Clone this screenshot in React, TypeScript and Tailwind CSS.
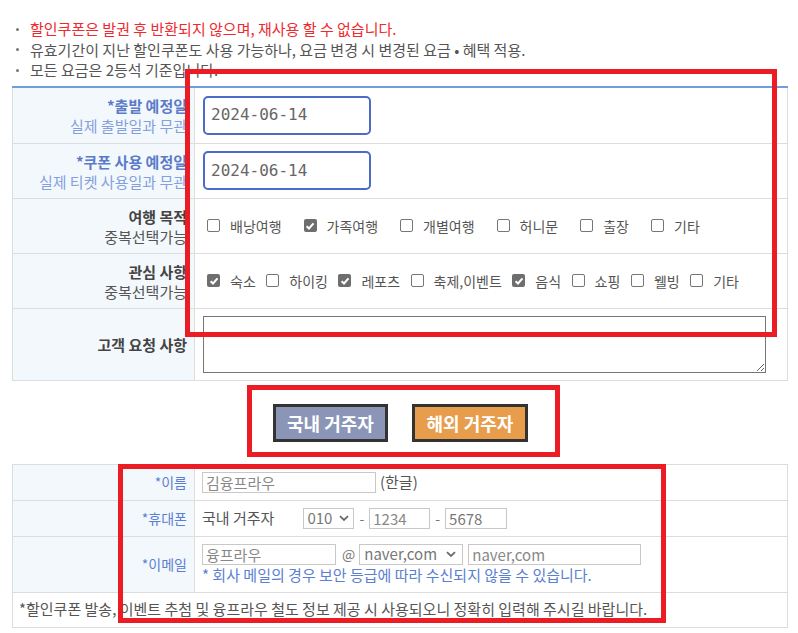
import React from "react";

function Check({ checked }: { checked?: boolean }) {
  return checked ? (
    <span className="w-[13px] h-[13px] rounded-[2px] bg-[#6e6e6e] flex items-center justify-center shrink-0">
      <svg width="10" height="10" viewBox="0 0 10 10">
        <path d="M1.6 5.2 L4 7.5 L8.5 2.3" stroke="white" strokeWidth="2" fill="none" />
      </svg>
    </span>
  ) : (
    <span className="w-[13px] h-[13px] rounded-[2px] border border-[#767676] bg-white shrink-0" />
  );
}

function Item({ label, checked }: { label: string; checked?: boolean }) {
  return (
    <span className="flex items-center gap-[10px]">
      <Check checked={checked} />
      <span className="text-[14px] leading-[18px] text-[#555]">{label}</span>
    </span>
  );
}

function Chevron() {
  return (
    <svg width="10" height="7" viewBox="0 0 10 7">
      <path d="M1 1.2 L5 5 L9 1.2" stroke="#6a6a6a" strokeWidth="1.8" fill="none" />
    </svg>
  );
}

function TopRow({
  h,
  label,
  children,
}: {
  h: string;
  label: React.ReactNode;
  children: React.ReactNode;
}) {
  return (
    <div className={`flex border-b border-[#dddddd] ${h}`}>
      <div className="w-[183px] shrink-0 bg-[#f3f8fc] border-l border-r border-[#dddddd] flex flex-col justify-center items-end pr-[7px] pt-[2px] text-right text-[15px] leading-[20px] whitespace-nowrap">
        {label}
      </div>
      <div className="flex-1 border-r border-[#dddddd] flex items-center pl-[8px]">{children}</div>
    </div>
  );
}

function BottomRow({
  h,
  label,
  children,
  top,
}: {
  h: string;
  label: string;
  children: React.ReactNode;
  top?: boolean;
}) {
  return (
    <div className={`flex border-b border-[#dddddd] ${h}`}>
      <div className="w-[183px] shrink-0 bg-[#f3f8fc] border-l border-r border-[#dddddd] flex items-center justify-end pr-[7px] text-[14px] text-[#5b7fd1]">
        {label}
      </div>
      <div
        className={`flex-1 border-r border-[#dddddd] flex pl-[7px] ${
          top ? "flex-col pt-[7px]" : "items-center"
        }`}
      >
        {children}
      </div>
    </div>
  );
}

function DateBox() {
  return (
    <div className="w-[168px] h-[39px] border-2 border-[#4a6cc6] rounded-[5px] pl-[6px] flex items-center font-['DejaVu_Sans_Mono',monospace] text-[16px] text-[#666]">
      2024-06-14
    </div>
  );
}

function Box({ w, text, color = "#888" }: { w: string; text?: string; color?: string }) {
  return (
    <div
      className={`${w} h-[21px] border border-[#c8c8c8] bg-white pl-[3px] flex items-center text-[15px] leading-[19px] whitespace-nowrap`}
      style={{ color }}
    >
      {text}
    </div>
  );
}

export default function App() {
  return (
    <div className="relative w-[798px] h-[633px] overflow-hidden bg-white font-['Noto_Sans_CJK_KR',sans-serif] text-[#555]">
      <ul className="pt-[19px] pl-[12px] text-[15px] leading-[20.5px]">
        <li className="flex items-center">
          <span className="ml-[4px] mr-[11px] w-[3px] h-[3px] rounded-full bg-[#777]" />
          <span className="text-[#ee2a2e]">할인쿠폰은 발권 후 반환되지 않으며, 재사용 할 수 없습니다.</span>
        </li>
        <li className="flex items-center">
          <span className="ml-[4px] mr-[11px] w-[3px] h-[3px] rounded-full bg-[#777]" />
          <span>유효기간이 지난 할인쿠폰도 사용 가능하나, 요금 변경 시 변경된 요금 • 혜택 적용.</span>
        </li>
        <li className="flex items-center">
          <span className="ml-[4px] mr-[11px] w-[3px] h-[3px] rounded-full bg-[#777]" />
          <span>모든 요금은 2등석 기준입니다.</span>
        </li>
      </ul>

      <div className="mt-[5px] ml-[12px] w-[776px] border-t-2 border-[#6e9edd]">
        <TopRow
          h="h-[56px]"
          label={
            <>
              <span className="font-bold text-[#5b7bc9]">*출발 예정일</span>
              <span className="text-[#84a0dc]">실제 출발일과 무관</span>
            </>
          }
        >
          <DateBox />
        </TopRow>
        <TopRow
          h="h-[55px]"
          label={
            <>
              <span className="font-bold text-[#5b7bc9]">*쿠폰 사용 예정일</span>
              <span className="text-[#84a0dc]">실제 티켓 사용일과 무관</span>
            </>
          }
        >
          <DateBox />
        </TopRow>
        <TopRow
          h="h-[55px]"
          label={
            <>
              <span className="font-bold text-[#444]">여행 목적</span>
              <span className="text-[#555]">중복선택가능</span>
            </>
          }
        >
          <div className="flex items-center gap-[22px] pl-[4px]">
            <Item label="배낭여행" />
            <Item label="가족여행" checked />
            <Item label="개별여행" />
            <Item label="허니문" />
            <Item label="출장" />
            <Item label="기타" />
          </div>
        </TopRow>
        <TopRow
          h="h-[55px]"
          label={
            <>
              <span className="font-bold text-[#444]">관심 사항</span>
              <span className="text-[#555]">중복선택가능</span>
            </>
          }
        >
          <div className="flex items-center gap-[10.5px] pl-[4px]">
            <Item label="숙소" checked />
            <Item label="하이킹" />
            <Item label="레포츠" checked />
            <Item label="축제,이벤트" />
            <Item label="음식" checked />
            <Item label="쇼핑" />
            <Item label="웰빙" />
            <Item label="기타" />
          </div>
        </TopRow>
        <TopRow h="h-[72px]" label={<span className="font-bold text-[#444]">고객 요청 사항</span>}>
          <textarea
            readOnly
            className="block w-[563px] h-[57px] border border-[#767676] bg-white outline-none"
          />
        </TopRow>
      </div>

      <div className="flex justify-center gap-[24px] pt-[23px] pl-[3px]">
        <button className="w-[115px] h-[38px] border-[3px] border-[#333] bg-[#8a95b8] text-white font-bold text-[18px] leading-[20px]">
          국내 거주자
        </button>
        <button className="w-[116px] h-[38px] border-[3px] border-[#333] bg-[#e89d4d] text-white font-bold text-[18px] leading-[20px]">
          해외 거주자
        </button>
      </div>

      <div className="mt-[22px] ml-[12px] w-[776px] border-t border-[#dddddd]">
        <BottomRow h="h-[36px]" label="*이름">
          <Box w="w-[174px]" text="김융프라우" />
          <span className="ml-[4px] text-[15px] text-[#555]">(한글)</span>
        </BottomRow>
        <BottomRow h="h-[36px]" label="*휴대폰">
          <span className="text-[15px] text-[#555]">국내 거주자</span>
          <div className="ml-[29px] w-[51px] h-[21px] border border-[#c8c8c8] pl-[3px] pr-[4px] flex items-center justify-between text-[15px] text-[#777]">
            <span>010</span>
            <Chevron />
          </div>
          <span className="mx-[5px] text-[14px] text-[#777]">-</span>
          <Box w="w-[61px]" text="1234" />
          <span className="mx-[5px] text-[14px] text-[#777]">-</span>
          <Box w="w-[62px]" text="5678" color="#777" />
        </BottomRow>
        <BottomRow h="h-[56px]" label="*이메일" top>
          <div className="flex items-center">
            <Box w="w-[134px]" text="융프라우" />
            <span className="ml-[6px] text-[14px] text-[#777]">@</span>
            <div className="ml-[4px] w-[104px] h-[21px] border border-[#c8c8c8] pl-[4px] pr-[6px] flex items-center justify-between text-[15px] text-[#777]">
              <span>naver,com</span>
              <Chevron />
            </div>
            <div className="ml-[5px]">
              <Box w="w-[173px]" text="naver,com" />
            </div>
          </div>
          <div className="text-[15px] leading-[20px] text-[#5b7fd1] whitespace-nowrap">
            * 회사 메일의 경우 보안 등급에 따라 수신되지 않을 수 있습니다.
          </div>
        </BottomRow>
        <div className="h-[35px] flex items-center border-b border-l border-r border-[#dddddd] pl-[6px] text-[15px] text-[#555] whitespace-nowrap">
          *할인쿠폰 발송, 이벤트 추첨 및 융프라우 철도 정보 제공 시 사용되오니 정확히 입력해 주시길 바랍니다.
        </div>
      </div>

      <div className="absolute left-[185px] top-[69px] w-[592px] h-[268px] border-[5px] border-[#ec1c24] pointer-events-none" />
      <div className="absolute left-[247px] top-[385px] w-[313px] h-[72px] border-[5px] border-[#ec1c24] pointer-events-none" />
      <div className="absolute left-[118px] top-[464px] w-[548px] h-[159px] border-[5px] border-[#ec1c24] pointer-events-none" />
    </div>
  );
}
